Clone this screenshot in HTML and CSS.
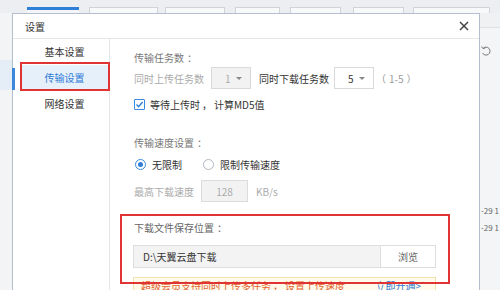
FILE: index.html
```html
<!DOCTYPE html>
<html lang="zh-CN">
<head>
<meta charset="utf-8">
<title>设置</title>
<link rel="stylesheet" href="styles.css">
</head>
<body>
<div class="app">
  <div class="tabbar">
    <span class="tab t1 active"></span>
    <span class="tab t2"></span>
    <span class="tab t3"></span>
    <span class="tab t4"></span>
    <span class="tab t5"></span>
    <span class="tab t6"></span>
    <span class="tab t7"></span>
  </div>
  <div class="leftstrip">
    <div class="lefthl"></div>
    <div class="leftbar"></div>
  </div>
  <div class="dialog">
    <div class="dlg-head">
      <span class="dlg-title">设置</span>
      <svg class="close" width="10" height="10" viewBox="0 0 10 10"><path d="M1 1L9 9M9 1L1 9" stroke="#444" stroke-width="1.5" fill="none"/></svg>
    </div>
    <div class="dlg-body">
      <nav class="side">
        <div class="side-item">基本设置</div>
        <div class="side-item active">传输设置<span class="mark mark-side"></span></div>
        <div class="side-item">网络设置</div>
      </nav>
      <main class="content">
        <div class="sec-title">传输任务数<span class="colon">：</span></div>
        <div class="row row-task">
          <span class="lbl dis">同时上传任务数</span>
          <span class="select disabled sel1"><span>1</span><i class="arrow"></i></span>
          <span class="lbl lbl-dl">同时下载任务数</span>
          <span class="select sel2"><span>5</span><i class="arrow"></i></span>
          <span class="lbl hint"><span class="lp">（</span>1-5<span class="rp">）</span></span>
        </div>
        <div class="row row-check">
          <span class="checkbox"><svg width="9" height="9" viewBox="0 0 9 9"><path d="M1.5 4.6L3.6 6.7L7.6 2" stroke="#2b7fd6" stroke-width="1.4" fill="none"/></svg></span>
          <span class="lbl">等待上传时<span class="comma">，</span>计算MD5值</span>
        </div>
        <div class="sec-title sec-speed">传输速度设置<span class="colon">：</span></div>
        <div class="row row-radio">
          <span class="radio on"></span>
          <span class="lbl">无限制</span>
          <span class="radio radio2"></span>
          <span class="lbl">限制传输速度</span>
        </div>
        <div class="row row-speed">
          <span class="lbl dis">最高下载速度</span>
          <span class="numbox">128</span>
          <span class="lbl dis unit">KB/s</span>
        </div>
        <div class="savegrp">
          <span class="mark mark-save"></span>
          <div class="sec-title">下载文件保存位置<span class="colon">：</span></div>
          <div class="row row-path">
            <span class="pathbox">D:\天翼云盘下载</span>
            <span class="browse">浏览</span>
          </div>
        </div>
        <div class="banner">
          <span class="banner-text">超级会员支持同时上传多任务<span class="comma">，</span>设置上传速度</span>
          <span class="banner-link">立即开通&gt;</span>
        </div>
      </main>
    </div>
  </div>
  <div class="rightstrip">
    <div class="rs-top"></div>
    <svg class="refresh" width="10" height="12" viewBox="0 0 10 12"><path d="M2 3.5A4 4 0 1 1 1.5 8" stroke="#777" stroke-width="1" fill="none"/><path d="M0.5 1.5L2.2 3.8L4.6 2.6" stroke="#777" stroke-width="1" fill="none"/></svg>
    <div class="rs-date d1">-29 1</div>
    <div class="rs-date d2">-29 1</div>
  </div>
</div>
</body>
</html>
```

FILE: styles.css
```css
html, body {
  margin: 0;
  padding: 0;
}
body {
  width: 500px;
  height: 290px;
  overflow: hidden;
  background: #eef0f3;
  font-family: "Noto Sans CJK SC", "Noto Sans", sans-serif;
  font-size: 10px;
  color: #333;
}
.colon {
  padding-left: 3px;
}
.comma {
  padding: 0 2px 0 2px;
}
.lp {
  padding-right: 3px;
}
.rp {
  padding-left: 3px;
}
.app {
  display: grid;
  grid-template-columns: 12px 468px 20px;
  grid-template-rows: 13px 277px;
  width: 500px;
  height: 290px;
  overflow: hidden;
}
.tabbar {
  grid-column: 1 / 4;
  display: flex;
  align-items: flex-end;
  padding-left: 27px;
  background: #eceef1;
}
.tab {
  height: 6px;
  box-sizing: border-box;
  border: 1px solid #d0d4d9;
  border-bottom: none;
  background: #f7f8f9;
  margin-right: 10px;
}
.tab.active {
  border: none;
  border-top: 3px solid #2f7fd8;
  background: #f3f5f8;
}
.t1 { width: 54px; }
.t2 { width: 72px; margin-right: 7px; }
.t3 { width: 63px; }
.t4 { width: 47px; }
.t5 { width: 53px; margin-right: 12px; }
.t6 { width: 53px; margin-right: 9px; }
.t7 { width: 80px; }

.leftstrip {
  position: relative;
  background: #f3f4f6;
}
.lefthl {
  margin-top: 47px;
  height: 30px;
  background: #e5edf6;
}
.leftbar {
  position: absolute;
  z-index: 2;
  right: -3px;
  top: 55px;
  width: 3px;
  height: 22px;
  background: #3b87dc;
}

.dialog {
  background: #fff;
  border: 1px solid #b3bfcf;
  border-bottom: none;
  display: flex;
  flex-direction: column;
  box-sizing: border-box;
}
.dlg-head {
  height: 24px;
  flex: none;
  border-bottom: 1px solid #e6e6e6;
  display: flex;
  align-items: center;
  justify-content: space-between;
  padding: 0 10px 0 12px;
}
.dlg-title {
  font-size: 10px;
  color: #333;
}
.close {
  display: block;
}
.dlg-body {
  flex: 1;
  display: flex;
}
.side {
  width: 96px;
  flex: none;
  border-right: 1px solid #e6e6e6;
}
.side-item {
  position: relative;
  height: 26px;
  line-height: 26px;
  text-align: center;
  color: #333;
  margin-left: 8px;
  margin-right: 1px;
}
.side-item.active {
  background: #e6f0fb;
  color: #2f7bd6;
}
.mark {
  position: absolute;
  border: 2px solid #e03434;
  box-sizing: border-box;
  pointer-events: none;
}
.mark-side {
  left: -1px;
  top: -3px;
  width: 90px;
  height: 29px;
}

.content {
  flex: 1;
  padding: 9px 0 0 24px;
}
.sec-title {
  height: 19px;
  line-height: 19px;
  color: #777;
}
.row {
  display: flex;
  align-items: center;
}
.lbl {
  white-space: nowrap;
  color: #333;
}
.lbl.dis {
  color: #aaa;
}
.row-task {
  height: 22px;
}
.select {
  width: 40px;
  height: 22px;
  box-sizing: border-box;
  border: 1px solid #d9d9d9;
  display: flex;
  align-items: center;
  justify-content: space-between;
  padding: 0 8px 0 13px;
  background: #fff;
  color: #333;
}
.select.disabled {
  background: #f2f2f2;
  color: #aaa;
}
.sel1 {
  margin: 0 8px 0 7px;
}
.sel2 {
  margin: 0 2px 0 5px;
}
.arrow {
  width: 0;
  height: 0;
  border-left: 3px solid transparent;
  border-right: 3px solid transparent;
  border-top: 3px solid #888;
}
.hint {
  color: #999;
}
.row-check {
  height: 20px;
  margin-top: 5px;
}
.checkbox {
  width: 11px;
  height: 11px;
  box-sizing: border-box;
  border: 1px solid #3a8ae0;
  border-radius: 1px;
  background: #fff;
  display: flex;
  align-items: center;
  justify-content: center;
  margin-right: 5px;
}
.checkbox svg {
  display: block;
}
.sec-speed {
  margin-top: 19px;
  height: 20px;
  line-height: 20px;
}
.row-radio {
  height: 20px;
  margin-top: 1px;
}
.radio {
  width: 11px;
  height: 11px;
  box-sizing: border-box;
  border: 1px solid #b3b9c2;
  border-radius: 50%;
  margin: 0 6px 0 1px;
  display: flex;
  align-items: center;
  justify-content: center;
  background: #fff;
}
.radio.on {
  border-color: #3a8ae0;
}
.radio.on::after {
  content: "";
  width: 5px;
  height: 5px;
  border-radius: 50%;
  background: #2f7fd8;
}
.radio2 {
  margin-left: 21px;
}
.row-speed {
  height: 22px;
  margin-top: 6px;
}
.numbox {
  width: 47px;
  height: 22px;
  box-sizing: border-box;
  border: 1px solid #dcdcdc;
  background: #f2f2f2;
  color: #aaa;
  display: flex;
  align-items: center;
  justify-content: center;
  margin: 0 8px 0 7px;
}
.savegrp {
  position: relative;
  margin-top: 16px;
}
.savegrp .sec-title {
  height: 20px;
  line-height: 20px;
  color: #666;
}
.mark-save {
  left: -14px;
  top: -4px;
  width: 330px;
  height: 70px;
}
.row-path {
  margin-top: 7px;
  width: 303px;
  height: 23px;
  margin-left: -1px;
}
.pathbox {
  flex: 1;
  height: 23px;
  box-sizing: border-box;
  border: 1px solid #dedede;
  border-right: none;
  background: #f3f3f3;
  display: flex;
  align-items: center;
  padding-left: 9px;
  color: #333;
}
.browse {
  width: 56px;
  height: 23px;
  box-sizing: border-box;
  border: 1px solid #dedede;
  background: #fff;
  color: #666;
  display: flex;
  align-items: center;
  justify-content: center;
}
.banner {
  margin-top: 9px;
  margin-left: -1px;
  width: 303px;
  height: 22px;
  box-sizing: border-box;
  border: 1px solid #f2e2b0;
  background: #fffaea;
  display: flex;
  align-items: flex-start;
  padding: 1px 8px 0 7px;
  justify-content: space-between;
  line-height: 14px;
}
.banner-text {
  color: #e2622f;
}
.banner-link {
  color: #2f7bd6;
  margin-right: 6px;
}

.rightstrip {
  position: relative;
  background: #f4f5f7;
}
.rs-top {
  height: 14px;
  border-bottom: 1px solid #dde0e4;
  background: #f0f1f3;
}
.refresh {
  position: absolute;
  left: 1px;
  top: 32px;
}
.rs-date {
  position: absolute;
  left: 1px;
  font-size: 8px;
  color: #666;
  white-space: nowrap;
}
.d1 { top: 192px; }
.d2 { top: 209px; }
```
